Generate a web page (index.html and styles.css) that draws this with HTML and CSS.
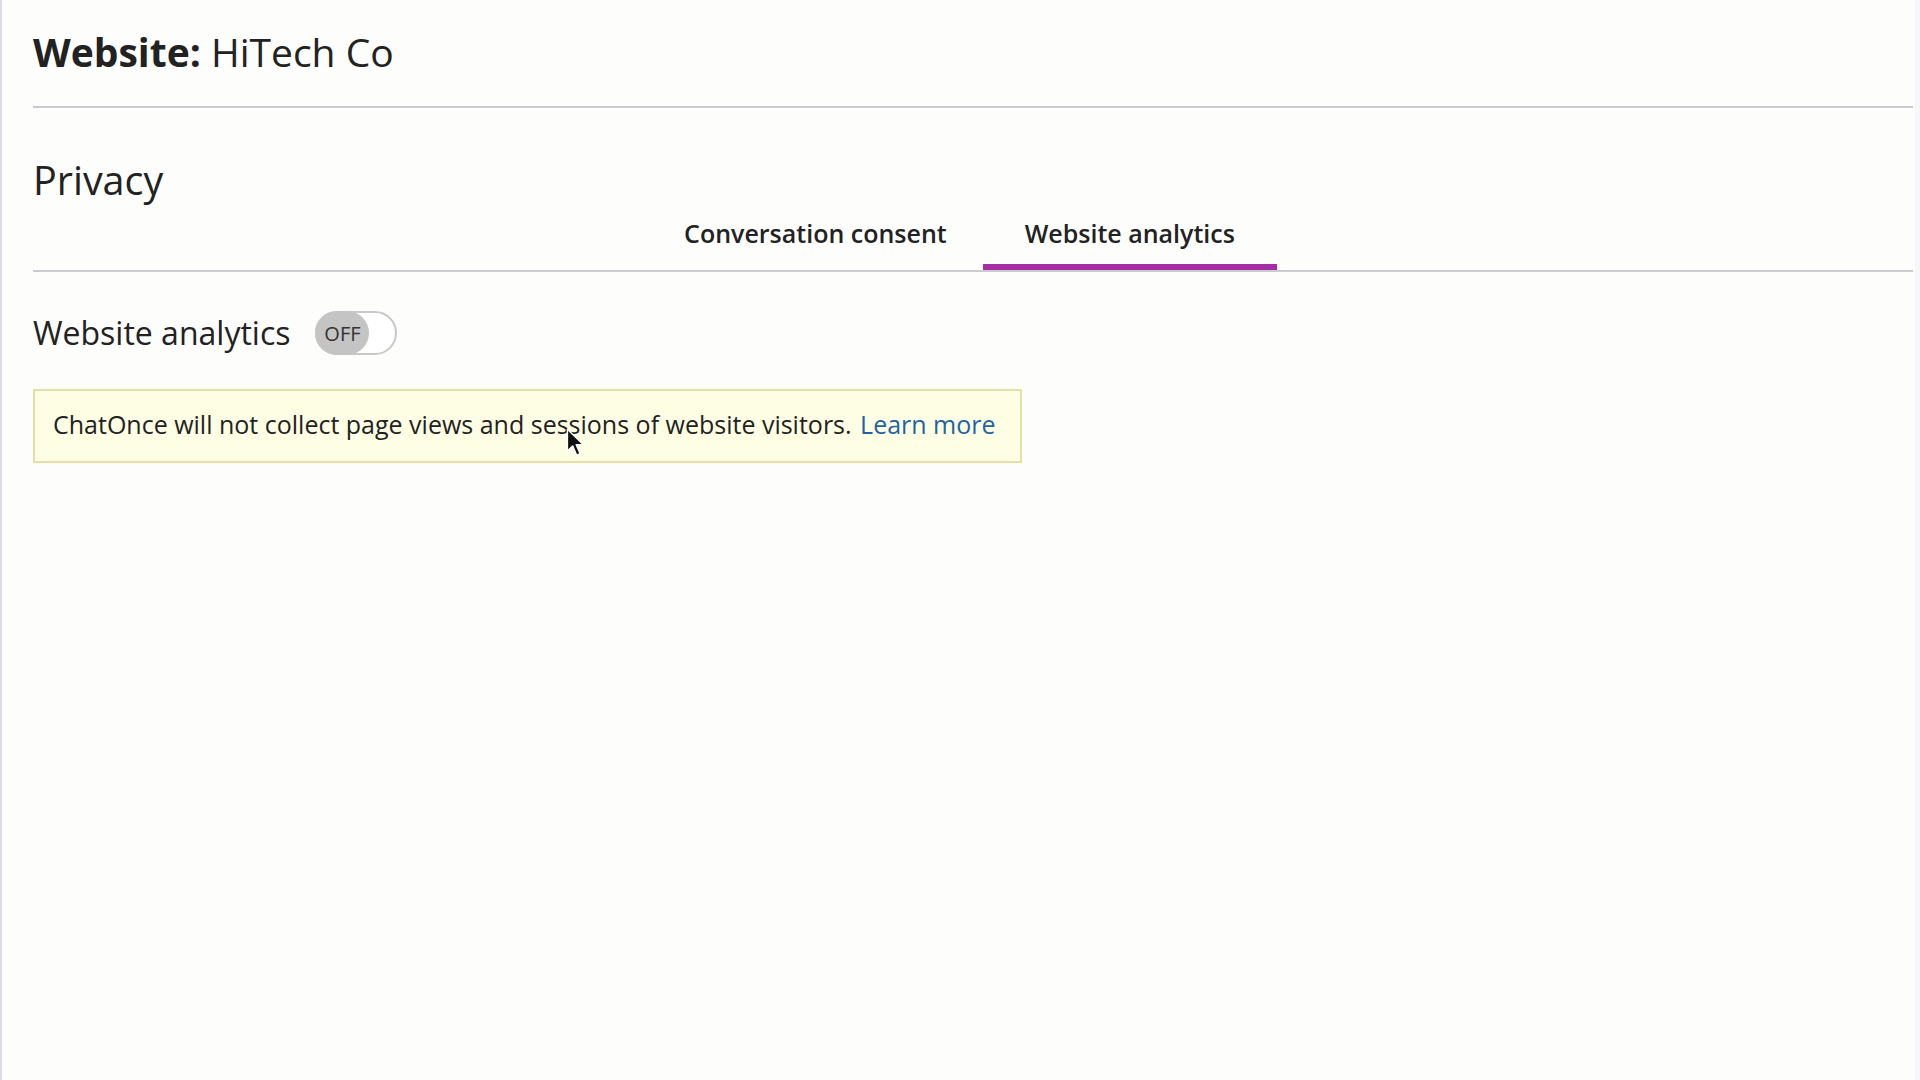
FILE: index.html
```html
<!DOCTYPE html>
<html lang="en">
<head>
    <meta charset="UTF-8">
    <meta name="viewport" content="width=device-width, initial-scale=1.0">
    <title>Website: HiTech Co - Privacy</title>
    <link rel="stylesheet" href="styles.css">
</head>
<body>
    <div class="page">
        <header class="site-header">
            <h1><strong>Website:</strong> HiTech Co</h1>
        </header>

        <section class="privacy">
            <h2>Privacy</h2>
            <nav class="tabs">
                <a class="tab">Conversation consent</a>
                <a class="tab active">Website analytics</a>
            </nav>

            <div class="setting">
                <span class="setting-label">Website analytics</span>
                <span class="switch">
                    <span class="knob">OFF</span>
                </span>
            </div>

            <div class="notice">
                ChatOnce will not collect page views and sessions of website visitors.
                <a class="link" href="#">Learn more</a>
            </div>
        </section>

        <svg class="cursor" width="19" height="30" viewBox="0 0 16 26">
            <path d="M1 1 L1 20 L5.5 15.5 L9 23.5 L12 22.2 L8.6 14.4 L14.6 14.4 Z" fill="#111" stroke="#fff" stroke-width="1.2" stroke-linejoin="round"/>
        </svg>
    </div>
</body>
</html>
```

FILE: styles.css
```css
html, body {
    margin: 0;
    padding: 0;
    height: 100%;
}

body {
    background: #f7f7fa;
    font-family: "Open Sans", "Noto Sans", sans-serif;
    color: #222;
    overflow: hidden;
}

.page {
    position: relative;
    box-sizing: border-box;
    width: calc(100% - 5px);
    min-height: 100%;
    background: #fdfdfc;
    border-left: 2px solid #dcdce4;
    padding: 0 2px 0 31px;
}

.site-header {
    padding-top: 25px;
    padding-bottom: 27px;
    border-bottom: 2px solid #cbcbcf;
}
.site-header h1 {
    margin: 0;
    font-size: 39px;
    font-weight: 400;
    line-height: 54px;
}
.site-header h1 strong {
    font-weight: 700;
}

.privacy h2 {
    margin: 46px 0 0 0;
    font-size: 39.5px;
    font-weight: 400;
    line-height: 52px;
}

.tabs {
    display: flex;
    justify-content: center;
    padding-right: 27px;
    border-bottom: 2px solid #cbcbcf;
}
.tab {
    padding: 10px 42px 13px 42px;
    font-size: 25px;
    font-weight: 600;
    line-height: 35px;
    color: #222;
    border-bottom: 6px solid transparent;
    cursor: pointer;
}
.tab:first-child {
    padding-right: 36px;
}
.tab.active {
    border-bottom-color: #a62ea5;
}

.setting {
    display: flex;
    align-items: center;
    margin-top: 39px;
}
.setting-label {
    font-size: 32px;
    line-height: 44px;
    margin-right: 25px;
}
.switch {
    display: flex;
    box-sizing: border-box;
    width: 82px;
    height: 44px;
    border: 2px solid #c8c8c8;
    border-radius: 22px;
    background: #fff;
}
.knob {
    display: flex;
    align-items: center;
    justify-content: center;
    width: 54px;
    height: 44px;
    margin: -2px;
    border-radius: 22px;
    background: #c4c4c4;
    font-size: 20px;
    color: #333;
}

.notice {
    display: inline-block;
    margin-top: 34px;
    padding: 16px 24px 20px 18px;
    border: 2px solid #e6e0a6;
    background: #fefee4;
    font-size: 25px;
    line-height: 34px;
}
.notice .link {
    color: #1f63a6;
    text-decoration: none;
    margin-left: 2px;
}

.cursor {
    position: absolute;
    left: 564px;
    top: 428px;
}
```
